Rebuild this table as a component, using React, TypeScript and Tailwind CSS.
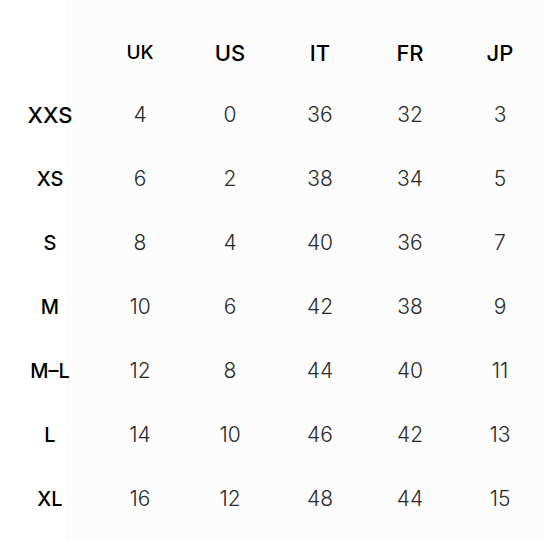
const headers = ["UK", "US", "IT", "FR", "JP"];

const rows: { size: string; values: number[] }[] = [
  { size: "XXS", values: [4, 0, 36, 32, 3] },
  { size: "XS", values: [6, 2, 38, 34, 5] },
  { size: "S", values: [8, 4, 40, 36, 7] },
  { size: "M", values: [10, 6, 42, 38, 9] },
  { size: "M–L", values: [12, 8, 44, 40, 11] },
  { size: "L", values: [14, 10, 46, 42, 13] },
  { size: "XL", values: [16, 12, 48, 44, 15] },
];

export default function App() {
  return (
    <div className="w-[543px] h-[541px] pt-[24px] pl-[5px] font-['Inter',sans-serif] bg-[linear-gradient(to_right,#ffffff_67px,#fcfcfc_67px)]">
      {/* Header */}
      <div className="grid grid-cols-[repeat(6,90px)] h-[59px] items-center text-center text-black font-medium">
        <span />
        {headers.map((h, i) => (
          <span key={h} className={i === 0 ? "text-[19px]" : "text-[22px]"}>{h}</span>
        ))}
      </div>

      {rows.map((r) => (
        <div key={r.size} className="grid grid-cols-[repeat(6,90px)] h-16 items-center text-center">
          <span className={r.size === "XXS" ? "text-black font-medium text-[22px]" : "text-black font-medium text-[20px]"}>
            {r.size}
          </span>
          {r.values.map((v, i) => (
            <span key={i} className="text-[21px] font-light text-[#2a2a2a]">{v}</span>
          ))}
        </div>
      ))}
    </div>
  );
}
